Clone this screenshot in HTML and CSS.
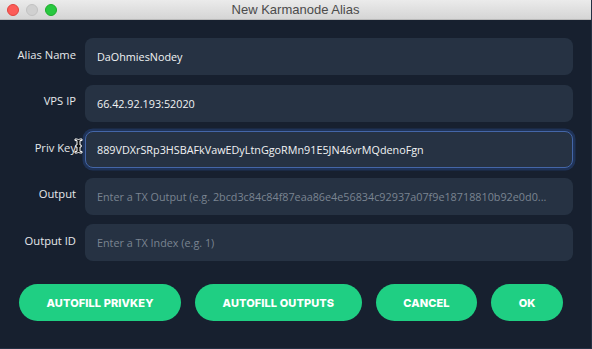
FILE: index.html
```html
<!doctype html>
<html lang="en">
  <head>
    <meta charset="UTF-8" />
    <meta name="viewport" content="width=device-width, initial-scale=1.0" />
    <title>New Karmanode Alias</title>
    <link rel="stylesheet" href="styles.css">
  </head>
  <body>
    <div class="window">
      <header class="titlebar">
        <div class="lights">
          <span class="light red"></span>
          <span class="light gray"></span>
          <span class="light green"></span>
        </div>
        <span class="title">New Karmanode Alias</span>
      </header>
      <main class="content">
        <form class="fields" onsubmit="return false;">
          <label class="label" for="alias">Alias Name</label>
          <input id="alias" class="field" type="text" value="DaOhmiesNodey" />

          <label class="label" for="ip">VPS IP</label>
          <input id="ip" class="field" type="text" value="66.42.92.193:52020" />

          <label class="label cursor-host" for="priv">Priv Key
            <svg class="ibeam" width="9" height="17" viewBox="0 0 9 17">
              <path d="M1 1h2.5l1 1 1-1H8v1.6H6v4.4h1.2v2H6v4.4h2V15H5.5l-1-1-1 1H1v-1.6h2V9H1.8V7H3V2.6H1z" fill="#111" stroke="#fff" stroke-width="1"/>
            </svg>
          </label>
          <input id="priv" class="field focus" type="text" value="889VDXrSRp3HSBAFkVawEDyLtnGgoRMn91E5JN46vrMQdenoFgn" />

          <label class="label" for="output">Output</label>
          <input id="output" class="field" type="text" placeholder="Enter a TX Output (e.g. 2bcd3c84c84f87eaa86e4e56834c92937a07f9e18718810b92e0d0..." />

          <label class="label" for="index">Output ID</label>
          <input id="index" class="field" type="text" placeholder="Enter a TX Index (e.g. 1)" />
        </form>
        <div class="actions">
          <button class="btn">Autofill Privkey</button>
          <button class="btn">Autofill Outputs</button>
          <button class="btn">Cancel</button>
          <button class="btn">OK</button>
        </div>
      </main>
    </div>
  </body>
</html>
```

FILE: styles.css
```css
* {
  box-sizing: border-box;
}

body {
  margin: 0;
  background: #17202f;
  font-family: "Open Sans", "DejaVu Sans", sans-serif;
}

.window {
  width: 592px;
  height: 349px;
  display: flex;
  flex-direction: column;
  border-right: 1px solid #243043;
  border-bottom: 1px solid #243043;
}

.titlebar {
  height: 20px;
  flex: none;
  position: relative;
  display: flex;
  align-items: center;
  justify-content: center;
  background: linear-gradient(#ebebeb, #d5d5d5);
  border-bottom: 1px solid #b9b9b9;
}

.lights {
  position: absolute;
  left: 7px;
  top: 4px;
  display: flex;
  gap: 7px;
}

.light {
  width: 12px;
  height: 12px;
  border-radius: 50%;
}

.red {
  background: #fc5b57;
  border: 1px solid #e0443e;
}

.gray {
  background: #d0d0d0;
  border: 1px solid #c2c2c2;
}

.green {
  background: #28c840;
  border: 1px solid #1dad2b;
}

.title {
  font-family: "Liberation Sans", Arial, sans-serif;
  font-size: 13px;
  color: #4b4b4b;
}

.content {
  flex: 1;
  display: flex;
  flex-direction: column;
  padding: 18px 18px 0 0;
}

.fields {
  display: grid;
  grid-template-columns: 76px 1fr;
  column-gap: 9px;
  row-gap: 9.5px;
  margin: 0;
}

.label {
  position: relative;
  align-self: center;
  justify-self: end;
  margin-bottom: 5px;
  font-size: 11.2px;
  color: #e6e8eb;
}

.ibeam {
  position: absolute;
  right: -7px;
  top: -2px;
}

.field {
  height: 37px;
  width: 100%;
  padding: 0 12px;
  border: none;
  border-radius: 8px;
  background: #263243;
  color: #f1f2f4;
  font-family: inherit;
  font-size: 10.8px;
  outline: none;
}

.field::placeholder {
  color: #7a8491;
}

.focus {
  border: 1.5px solid #4466a8;
  box-shadow: 0 0 0 2.5px #1f3358;
  padding-left: 11px;
}

.actions {
  display: flex;
  gap: 14px;
  padding: 23px 0 0 19px;
}

.btn {
  height: 37px;
  padding: 0 27.5px;
  border: none;
  border-radius: 19px;
  background: #1fcf83;
  color: #fff;
  font-family: "Inter", sans-serif;
  font-weight: 800;
  font-size: 11px;
  letter-spacing: 0.1px;
  text-transform: uppercase;
}
```
